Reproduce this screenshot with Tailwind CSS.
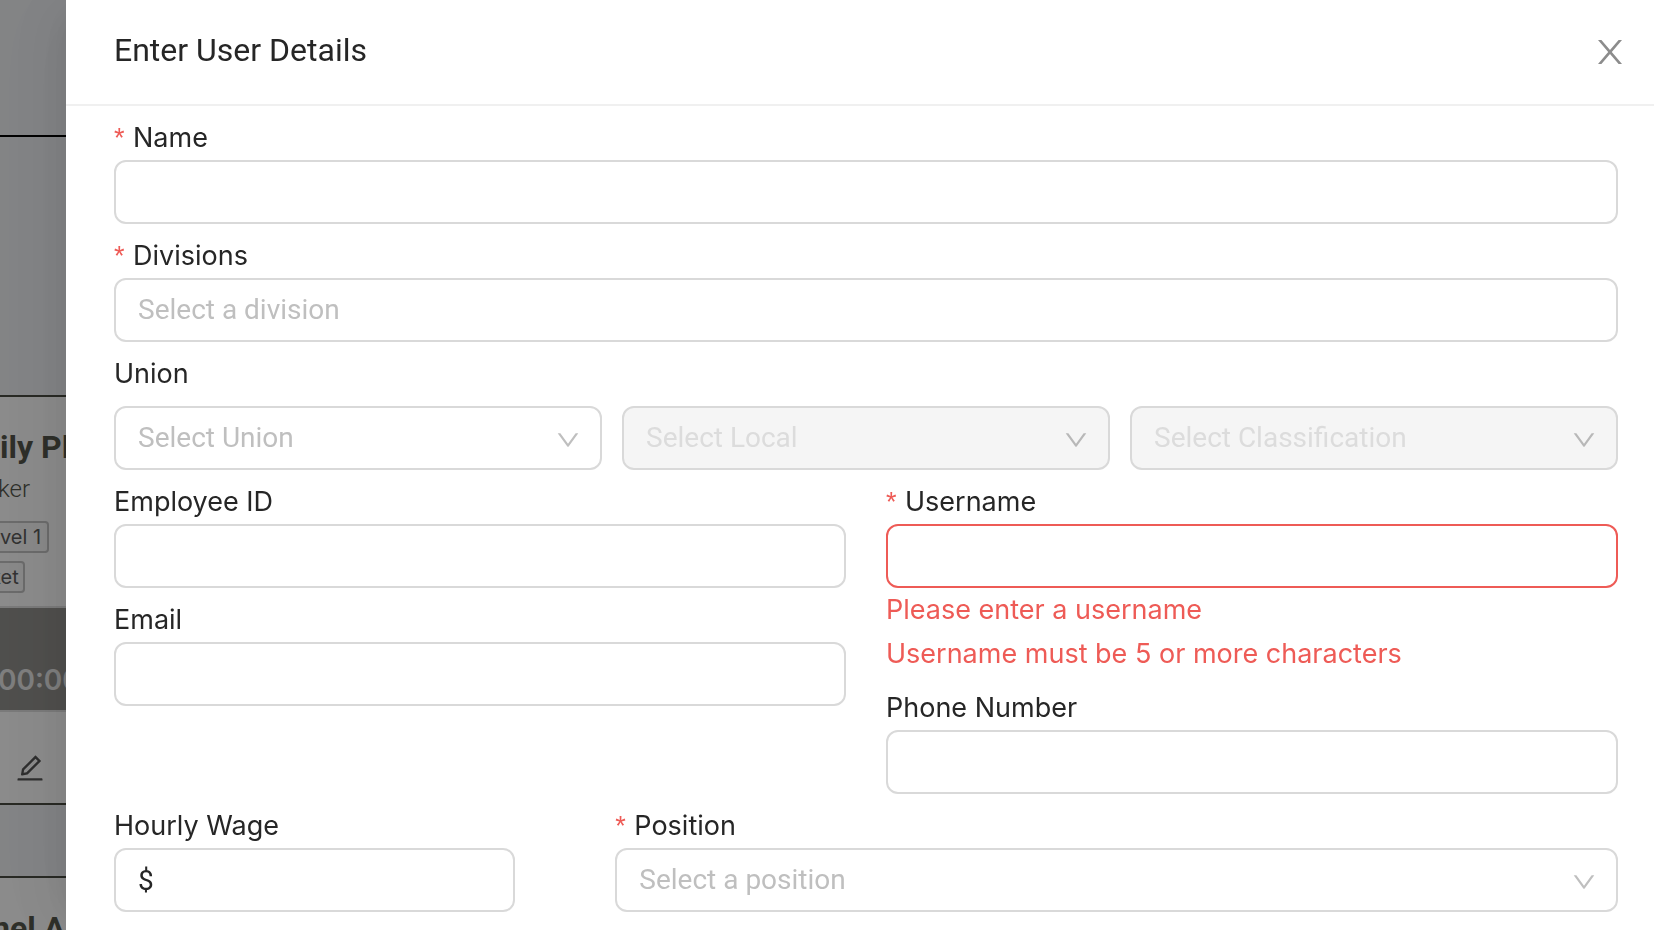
<!DOCTYPE html>
<html lang="en">
  <head>
    <meta charset="UTF-8" />
    <meta name="viewport" content="width=device-width, initial-scale=1.0" />
    <title>Enter User Details</title>
    <script src="https://cdn.jsdelivr.net/npm/@tailwindcss/browser@4"></script>
  </head>
  <body class="h-screen overflow-hidden bg-[#f0f2f5] font-[Roboto,sans-serif] text-[28px] leading-[44px] text-[#262626]">
    <!-- Page behind the drawer -->
    <div class="flex h-screen w-40 flex-col overflow-hidden whitespace-nowrap" aria-hidden="true">
      <div class="h-[137px] shrink-0 border-b-2 border-black"></div>
      <div class="h-[258px] shrink-0"></div>
      <article class="shrink-0 border-y-2 border-[#4a4c42] bg-white">
        <div class="h-[211px] border-b-2 border-[#e0e0e0] pt-7">
          <h2 class="text-[32px] font-bold text-[#55564c]">ily Pl</h2>
          <p class="-ml-0.5 text-[24px] leading-[40px] font-light text-[#55564c]">ker</p>
          <div class="mt-3 flex flex-col items-start gap-2 font-[Inter,sans-serif] text-[20px] leading-[28px] text-[#5c5c5c]">
            <span class="rounded-r border-2 border-l-0 border-[#c4c4c4] bg-[#fafafa] pr-1.5">vel 1</span>
            <span class="-ml-2.5 rounded-r border-2 border-l-0 border-[#c4c4c4] bg-[#fafafa] pr-1">ket</span>
          </div>
        </div>
        <div class="flex h-[104px] items-end border-b-2 border-[#e0e0e0] bg-[#92918d] pb-2 font-[Inter,sans-serif] font-semibold text-[#e8e8e8]">
          <span class="-ml-0.5">00:00</span>
        </div>
        <div class="flex h-[91px] items-center pt-5 pl-4">
          <svg class="size-7" viewBox="64 64 896 896" fill="#555">
            <path d="M257.700 752c2 0 4-.2 6-.5L431.900 722c2-.4 3.900-1.300 5.300-2.800l423.900-423.900a9.960 9.960 0 0 0 0-14.100L694.900 114.900c-1.900-1.900-4.400-2.900-7.100-2.900s-5.200 1-7.100 2.900L256.800 538.800c-1.500 1.500-2.400 3.300-2.800 5.300l-29.500 168.200a33.500 33.500 0 0 0 9.400 29.800c6.600 6.400 14.900 9.900 23.800 9.900zm67.400-174.400L687.800 215l73.300 73.300-362.700 362.600-88.900 15.700 15.600-89zM880 836H144c-17.700 0-32 14.300-32 32v36c0 4.400 3.600 8 8 8h784c4.400 0 8-3.600 8-8v-36c0-17.700-14.300-32-32-32z" />
          </svg>
        </div>
      </article>
      <div class="h-[71px] shrink-0"></div>
      <article class="flex-1 border-t-2 border-[#4a4c42] bg-white pt-7">
        <h2 class="-ml-2 text-[32px] font-bold text-[#55564c]">nel Al</h2>
      </article>
    </div>
    <div class="fixed inset-0 bg-black/45"></div>

    <!-- Drawer -->
    <aside class="fixed inset-y-0 right-0 left-[66px] overflow-hidden bg-white shadow-[-12px_0_32px_-16px_rgba(0,0,0,0.08),-18px_0_56px_0_rgba(0,0,0,0.05),-24px_0_96px_32px_rgba(0,0,0,0.03)]" role="dialog" aria-labelledby="drawer-title">
      <header class="flex items-center justify-between border-b-2 border-[#f0f0f0] py-[30px] pr-[30px] pl-12">
        <h1 id="drawer-title" class="pb-1 text-[32px] leading-[40px]">Enter User Details</h1>
        <button type="button" aria-label="Close" class="text-[#8c8c8c]">
          <svg class="size-7" viewBox="0 0 28 28" fill="currentColor">
            <path d="M2 2h3.400l8.600 10.100L22.600 2H26L15.800 14 26 26h-3.400L14 15.900 5.400 26H2l10.200-12z" />
          </svg>
        </button>
      </header>

      <form class="flex flex-col gap-2.5 py-2.5 pr-9 pl-12">
        <div>
          <label for="name" class="flex font-[Inter,sans-serif] text-[27px]"><span class="w-[19px] font-['Liberation_Sans',sans-serif] text-[#ee5b56]">*</span>Name</label>
          <input id="name" type="text" class="block h-16 w-full rounded-xl border-2 border-[#d9d9d9] px-[22px]" />
        </div>

        <div>
          <label for="divisions" class="flex font-[Inter,sans-serif] text-[27px]"><span class="w-[19px] font-['Liberation_Sans',sans-serif] text-[#ee5b56]">*</span>Divisions</label>
          <input id="divisions" type="text" placeholder="Select a division" class="block h-16 w-full rounded-xl border-2 border-[#d9d9d9] px-[22px] pb-0.5 placeholder:text-[#bfbfbf]" />
        </div>

        <div>
          <label for="union" class="block font-[Inter,sans-serif] text-[27px]">Union</label>
          <div class="mt-2.5 grid grid-cols-3 gap-5">
            <div class="relative">
              <select id="union" class="block h-16 w-full appearance-none rounded-xl border-2 border-[#d9d9d9] px-[22px] text-[#bfbfbf]">
                <option>Select Union</option>
              </select>
              <svg class="pointer-events-none absolute top-[22px] right-[22px] size-6" viewBox="64 64 896 896" fill="#bfbfbf"><path d="M884 256h-75c-5.100 0-9.900 2.500-12.900 6.600L512 654.200 227.900 262.600c-3-4.100-7.800-6.600-12.900-6.600h-75c-6.500 0-10.300 7.400-6.500 12.700l352.600 486.100c12.800 17.600 39 17.600 51.700 0l352.600-486.100c3.900-5.300.1-12.700-6.400-12.700z" /></svg>
            </div>
            <div class="relative">
              <select disabled aria-label="Local" class="block h-16 w-full appearance-none rounded-xl border-2 border-[#d9d9d9] bg-[#f5f5f5] px-[22px] text-[#dcdcdc] opacity-100">
                <option>Select Local</option>
              </select>
              <svg class="pointer-events-none absolute top-[22px] right-[22px] size-6" viewBox="64 64 896 896" fill="#b8b8b8"><path d="M884 256h-75c-5.100 0-9.900 2.500-12.900 6.600L512 654.200 227.900 262.600c-3-4.100-7.800-6.600-12.900-6.600h-75c-6.500 0-10.300 7.400-6.500 12.700l352.600 486.100c12.800 17.600 39 17.600 51.700 0l352.600-486.100c3.900-5.300.1-12.700-6.400-12.700z" /></svg>
            </div>
            <div class="relative">
              <select disabled aria-label="Classification" class="block h-16 w-full appearance-none rounded-xl border-2 border-[#d9d9d9] bg-[#f5f5f5] px-[22px] text-[#dcdcdc] opacity-100">
                <option>Select Classification</option>
              </select>
              <svg class="pointer-events-none absolute top-[22px] right-[22px] size-6" viewBox="64 64 896 896" fill="#b8b8b8"><path d="M884 256h-75c-5.100 0-9.900 2.500-12.900 6.600L512 654.200 227.900 262.600c-3-4.100-7.800-6.600-12.900-6.600h-75c-6.500 0-10.300 7.400-6.500 12.700l352.600 486.100c12.800 17.600 39 17.600 51.700 0l352.600-486.100c3.900-5.300.1-12.700-6.400-12.700z" /></svg>
            </div>
          </div>
        </div>

        <div class="grid grid-cols-2 gap-10">
          <div class="flex flex-col gap-2.5">
            <div>
              <label for="employee-id" class="block font-[Inter,sans-serif] text-[27px]">Employee ID</label>
              <input id="employee-id" type="text" class="block h-16 w-full rounded-xl border-2 border-[#d9d9d9] px-[22px]" />
            </div>
            <div>
              <label for="email" class="block font-[Inter,sans-serif] text-[27px]">Email</label>
              <input id="email" type="email" class="block h-16 w-full rounded-xl border-2 border-[#d9d9d9] px-[22px]" />
            </div>
          </div>
          <div class="flex flex-col gap-2.5">
            <div>
              <label for="username" class="flex font-[Inter,sans-serif] text-[27px]"><span class="w-[19px] font-['Liberation_Sans',sans-serif] text-[#ee5b56]">*</span>Username</label>
              <input id="username" type="text" aria-invalid="true" aria-describedby="username-error" class="block h-16 w-full rounded-xl border-2 border-[#ee5b56] px-[22px]" />
              <div id="username-error" class="font-[Inter,sans-serif] text-[27px] text-[#ee5b56]">
                <p>Please enter a username</p>
                <p>Username must be 5 or more characters</p>
              </div>
            </div>
            <div>
              <label for="phone" class="block font-[Inter,sans-serif] text-[27px]">Phone Number</label>
              <input id="phone" type="tel" class="block h-16 w-full rounded-xl border-2 border-[#d9d9d9] px-[22px]" />
            </div>
          </div>
        </div>

        <div class="grid grid-cols-15">
          <div class="col-span-4">
            <label for="wage" class="block font-[Inter,sans-serif] text-[27px]">Hourly Wage</label>
            <input id="wage" type="text" value="$ " class="block h-16 w-full rounded-xl border-2 border-[#d9d9d9] px-[22px]" />
          </div>
          <div class="col-span-10 col-start-6">
            <label for="position" class="flex font-[Inter,sans-serif] text-[27px]"><span class="w-[19px] font-['Liberation_Sans',sans-serif] text-[#ee5b56]">*</span>Position</label>
            <div class="relative">
              <select id="position" class="block h-16 w-full appearance-none rounded-xl border-2 border-[#d9d9d9] px-[22px] text-[#bfbfbf]">
                <option>Select a position</option>
              </select>
              <svg class="pointer-events-none absolute top-[22px] right-[22px] size-6" viewBox="64 64 896 896" fill="#bfbfbf"><path d="M884 256h-75c-5.100 0-9.900 2.500-12.900 6.600L512 654.200 227.900 262.600c-3-4.100-7.800-6.600-12.900-6.600h-75c-6.500 0-10.300 7.400-6.500 12.700l352.600 486.100c12.800 17.600 39 17.600 51.700 0l352.600-486.100c3.900-5.300.1-12.700-6.400-12.700z" /></svg>
            </div>
          </div>
        </div>
      </form>
    </aside>
  </body>
</html>
